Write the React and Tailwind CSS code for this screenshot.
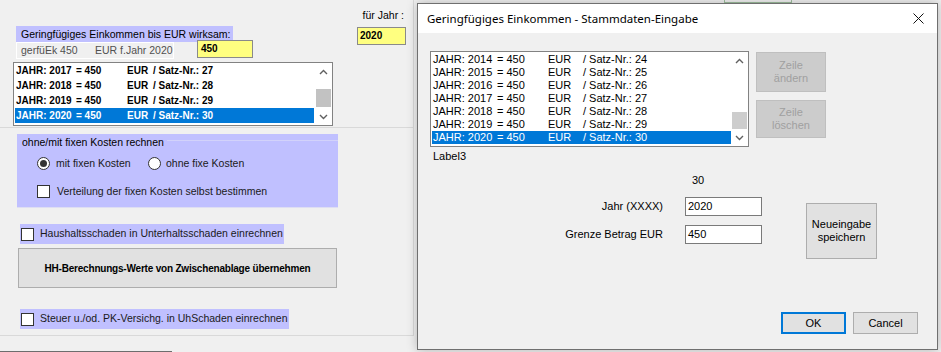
import React from "react";

const Up = () => (
  <svg width="9" height="6" viewBox="0 0 9 6">
    <path d="M1 5 L4.5 1.5 L8 5" fill="none" stroke="#606060" strokeWidth="1.4" />
  </svg>
);
const Down = () => (
  <svg width="9" height="6" viewBox="0 0 9 6">
    <path d="M1 1 L4.5 4.5 L8 1" fill="none" stroke="#606060" strokeWidth="1.4" />
  </svg>
);

const Check = () => <div className="w-[13px] h-[13px] border border-[#333] bg-white shrink-0" />;
const Radio = ({ on }) => (
  <div className="w-[13px] h-[13px] rounded-full border border-[#333] bg-white shrink-0 flex items-center justify-center">
    {on && <div className="w-[7px] h-[7px] rounded-full bg-[#333]" />}
  </div>
);

const leftRows = [
  [2017, 27],
  [2018, 28],
  [2019, 29],
  [2020, 30],
];
const dlgRows = [
  [2014, 24],
  [2015, 25],
  [2016, 26],
  [2017, 27],
  [2018, 28],
  [2019, 29],
  [2020, 30],
];

function LeftPanel() {
  return (
    <div className="w-[414px] h-[336px] border-r border-b border-[#d9d9d9] text-[10.5px] text-[#1a1a1a]">
      <div className="h-[128px] border-b border-[#d9d9d9]">
        <div className="flex items-start">
          <div className="ml-[16px] mt-[26px] w-[237px] shrink-0">
            <div className="w-[217px] h-[16px] bg-[#c0c0ff] pl-[5px] leading-[16px] text-black">
              Geringfügiges Einkommen bis EUR wirksam:
            </div>
            <div className="flex items-start">
              <div className="w-[158px] h-[17px] border border-white pl-[4px] leading-[15px] text-[#505050] flex whitespace-nowrap">
                <span className="w-[74px]">gerfüEk 450</span>
                <span>EUR f.Jahr 2020</span>
              </div>
              <div className="ml-[23px] mt-[-2px] w-[56px] h-[18px] border border-[#8a8a8a] bg-[#ffff80] pl-[3px] leading-[16px] font-bold text-[10px] text-black">
                450
              </div>
            </div>
          </div>
          <div className="ml-[104px] mt-[9px] w-[49px] shrink-0">
            <div className="h-[13px] leading-[13px] text-right pr-[2px] text-black whitespace-nowrap">für Jahr :</div>
            <div className="mt-[5px] h-[18px] border border-[#8a8a8a] bg-[#ffff80] pl-[2px] leading-[16px] font-bold text-[10px] text-black">
              2020
            </div>
          </div>
        </div>
        <div className="ml-[13px] mt-[3px] w-[320px] h-[64px] border border-[#828282] bg-white flex">
          <div className="flex-1 pl-[1px] pr-[1px]">
            {leftRows.map(([y, n]) => (
              <div
                key={y}
                className={
                  y === 2020
                    ? "h-[15px] flex items-center pl-[1px] text-[10px] font-bold whitespace-nowrap bg-[#0078d7] text-white"
                    : "h-[15px] flex items-center pl-[1px] text-[10px] font-bold whitespace-nowrap text-black"
                }
              >
                <span className="w-[60px]">JAHR: {y}</span>
                <span className="w-[51px]">= 450</span>
                <span className="w-[26px]">EUR</span>
                <span>/ Satz-Nr.: {n}</span>
              </div>
            ))}
          </div>
          <div className="w-[17px] flex flex-col">
            <div className="h-[17px] flex items-center justify-center"><Up /></div>
            <div className="flex-1 flex flex-col justify-end items-center">
              <div className="w-[15px] h-[18px] bg-[#c2c2c2] mb-[1px]" />
            </div>
            <div className="h-[17px] flex items-center justify-center"><Down /></div>
          </div>
        </div>
      </div>

      <div className="flex flex-col items-start">
        <div className="ml-[17px] mt-[6px] w-[321px] h-[74px] bg-[#c0c0ff] border-b border-[#dedef3] relative">
          <div className="absolute left-[150px] right-0 top-[6px] h-px bg-[#d2d2fa]" />
          <div className="pl-[5px] pt-[2px] h-[14px] leading-[12px] text-black">ohne/mit fixen Kosten rechnen</div>
          <div className="mt-[9px] ml-[20px] flex items-center h-[13px]">
            <div className="w-[111px] flex items-center gap-[6px]">
              <Radio on />
              <span>mit fixen Kosten</span>
            </div>
            <div className="flex items-center gap-[5px]">
              <Radio />
              <span>ohne fixe Kosten</span>
            </div>
          </div>
          <div className="mt-[15px] ml-[20px] flex items-center gap-[7px] h-[13px]">
            <Check />
            <span>Verteilung der fixen Kosten selbst bestimmen</span>
          </div>
        </div>

        <div className="ml-[20px] mt-[16px] w-[264px] h-[20px] bg-[#c0c0ff] flex items-center pl-[1px] gap-[6px]">
          <Check />
          <span>Haushaltsschaden in Unterhaltsschaden einrechnen</span>
        </div>

        <div className="ml-[18px] mt-[4px] w-[319px] h-[40px] bg-[#e1e1e1] border border-[#adadad] flex items-center justify-center font-bold text-[10px] tracking-[-0.2px] text-black">
          HH-Berechnungs-Werte von Zwischenablage übernehmen
        </div>

        <div className="ml-[20px] mt-[21px] w-[269px] h-[20px] bg-[#c0c0ff] flex items-center pl-[1px] gap-[6px]">
          <Check />
          <span>Steuer u./od. PK-Versichg. in UhSchaden einrechnen</span>
        </div>
      </div>
    </div>
  );
}

function Dialog() {
  return (
    <div className="absolute left-[417px] top-[3px] w-[521px] h-[347px] border border-[#6f6f6f] bg-[#f0f0f0] flex flex-col shadow-[0_0_10px_rgba(0,0,0,0.25)] text-[11px] text-black">
      <div className="h-[29px] bg-white flex items-center justify-between pl-[9px] pr-[13px] shrink-0">
        <span className="font-['Noto_Sans',sans-serif] text-[11.5px] text-black">
          Geringfügiges Einkommen - Stammdaten-Eingabe
        </span>
        <svg width="11" height="11" viewBox="0 0 11 11">
          <path d="M0.5 0.5 L10.5 10.5 M10.5 0.5 L0.5 10.5" stroke="#111" strokeWidth="1" />
        </svg>
      </div>

      <div className="flex items-start mt-[18px] ml-[12px]">
        <div className="w-[319px] h-[96px] border border-[#828282] bg-white flex">
          <div className="flex-1 pl-[1px] pt-[1px]">
            {dlgRows.map(([y, n]) => (
              <div
                key={y}
                className={
                  y === 2020
                    ? "h-[13px] flex items-center pl-[1px] leading-[13px] whitespace-nowrap bg-[#0078d7] text-white"
                    : "h-[13px] flex items-center pl-[1px] leading-[13px] whitespace-nowrap text-black"
                }
              >
                <span className="w-[64px]">JAHR: {y}</span>
                <span className="w-[51px]">= 450</span>
                <span className="w-[35px]">EUR</span>
                <span>/ Satz-Nr.: {n}</span>
              </div>
            ))}
          </div>
          <div className="w-[17px] flex flex-col">
            <div className="h-[17px] flex items-center justify-center"><Up /></div>
            <div className="flex-1 flex flex-col justify-end items-center">
              <div className="w-[15px] h-[17px] bg-[#cdcdcd]" />
            </div>
            <div className="h-[17px] flex items-center justify-center"><Down /></div>
          </div>
        </div>
        <div className="ml-[7px] mt-[1px] flex flex-col gap-[8px]">
          <div className="w-[70px] h-[40px] bg-[#cccccc] border border-[#bfbfbf] flex items-center justify-center text-center leading-[13px] text-[#a0a0a0]">
            Zeile<br />ändern
          </div>
          <div className="w-[70px] h-[38px] bg-[#cccccc] border border-[#bfbfbf] flex items-center justify-center text-center leading-[13px] text-[#a0a0a0]">
            Zeile<br />löschen
          </div>
        </div>
      </div>

      <div className="mt-[3px] ml-[15px] h-[13px] leading-[13px]">Label3</div>
      <div className="mt-[11px] ml-[274px] h-[13px] leading-[13px]">30</div>

      <div className="mt-[10px] flex items-start">
        <div className="flex flex-col gap-[9px]">
          <div className="flex items-center h-[19px]">
            <span className="w-[245px] text-right">Jahr (XXXX)</span>
            <div className="ml-[22px] w-[77px] h-[19px] bg-white border border-[#7a7a7a] pl-[2px] leading-[16px]">2020</div>
          </div>
          <div className="flex items-center h-[19px]">
            <span className="w-[245px] text-right">Grenze Betrag EUR</span>
            <div className="ml-[22px] w-[77px] h-[19px] bg-white border border-[#7a7a7a] pl-[2px] leading-[16px]">450</div>
          </div>
        </div>
        <div className="ml-[44px] mt-[6px] w-[71px] h-[56px] bg-[#e1e1e1] border border-[#adadad] flex items-center justify-center text-center leading-[13px]">
          Neueingabe<br />speichern
        </div>
      </div>

      <div className="mt-auto mb-[15px] mr-[19px] flex justify-end gap-[7px]">
        <div className="w-[65px] h-[22px] bg-[#e1e1e1] border-2 border-[#0078d7] flex items-center justify-center">OK</div>
        <div className="w-[65px] h-[22px] bg-[#e1e1e1] border border-[#adadad] flex items-center justify-center">Cancel</div>
      </div>
    </div>
  );
}

export default function App() {
  return (
    <div className="relative w-[941px] h-[352px] bg-[#f0f0f0] overflow-hidden font-['Liberation_Sans',Arial,sans-serif]">
      <LeftPanel />
      <div className="mt-[15px] w-[172px] h-px bg-[#6d6d6d]" />
      <div className="absolute left-[724px] top-[-10px] w-[68px] h-[13px] border border-[#9fbf9f] bg-[#f0f0f0]" />
      <Dialog />
    </div>
  );
}
